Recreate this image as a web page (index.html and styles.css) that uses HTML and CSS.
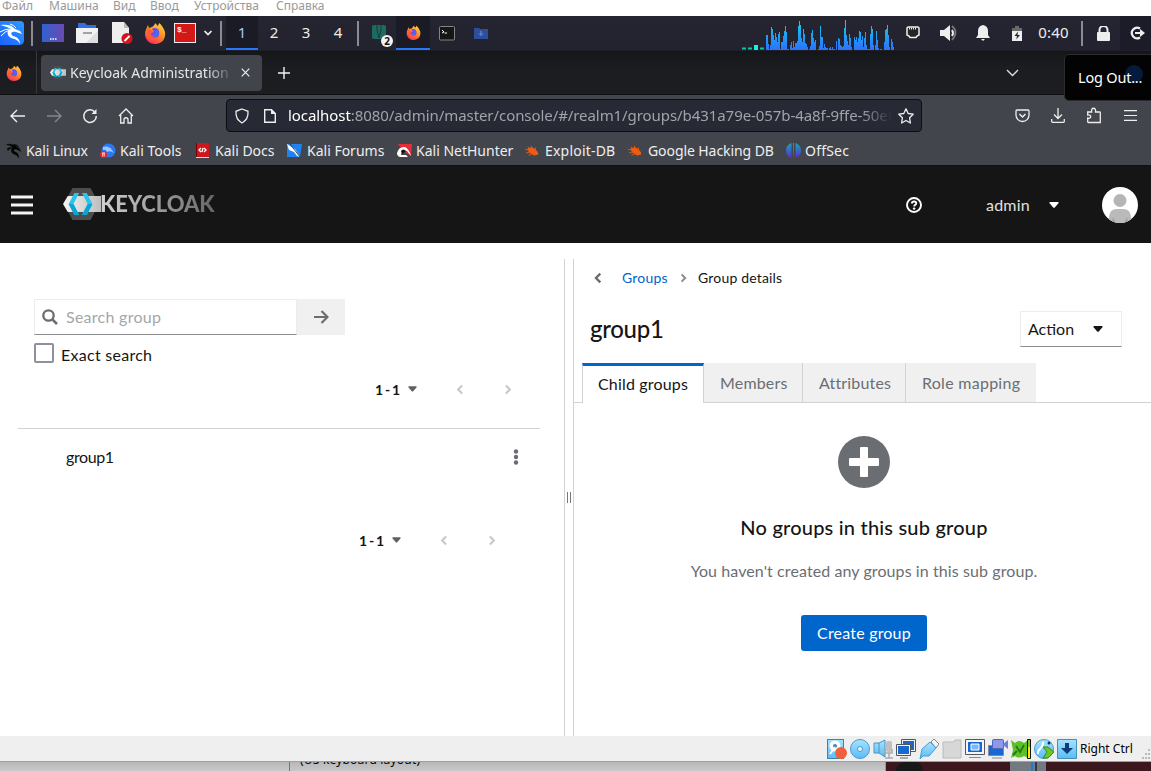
FILE: index.html
```html
<!DOCTYPE html>
<html lang="ru">
<head>
<meta charset="utf-8">
<title>Keycloak Administration UI</title>
<link rel="stylesheet" href="styles.css">
</head>
<body>
<svg class="defs" width="0" height="0">
  <defs>
    <linearGradient id="gFox" x1="0.8" y1="0" x2="0.3" y2="1"><stop offset="0" stop-color="#ffd43a"/><stop offset=".5" stop-color="#ff8a26"/><stop offset="1" stop-color="#f5305a"/></linearGradient>
    <linearGradient id="gDesk" x1="0" x2="1"><stop offset="0" stop-color="#2f62d0"/><stop offset="1" stop-color="#6a4ab2"/></linearGradient>
    <linearGradient id="gKali" x1="0" y1="1" x2="1" y2="0"><stop offset="0" stop-color="#1b62ff"/><stop offset="1" stop-color="#2c9cff"/></linearGradient>
    <linearGradient id="gBars" gradientUnits="userSpaceOnUse" x1="0" y1="0" x2="0" y2="30"><stop offset="0" stop-color="#10d8e8"/><stop offset="1" stop-color="#2b70ff"/></linearGradient>
    <linearGradient id="gOff" gradientUnits="userSpaceOnUse" x1="0" y1="0" x2="0" y2="15"><stop offset="0" stop-color="#12a8b4"/><stop offset="1" stop-color="#5a2ad8"/></linearGradient>
    <linearGradient id="gSky" x1="0" y1="0" x2="0" y2="1"><stop offset="0" stop-color="#a8e2ff"/><stop offset="1" stop-color="#58bdf4"/></linearGradient>
    <linearGradient id="gLogo" x1="0" x2="1"><stop offset="0" stop-color="#f5f5f5"/><stop offset="1" stop-color="#bdbdbd"/></linearGradient>
    <symbol id="fox" viewBox="0 0 22 22">
      <path d="M4 3l1 3 3-1c2-1 3-3 3-4l3 3 1-3c3 2 5 6 6 9 1 7-3 12-10 12C5 22 1 17 1 12c0-4 2-6 3-9z" fill="url(#gFox)"/>
      <path d="M8 7c2-2 6-1 7 2 1 4-1 7-4 7-4 0-5-3-4-5l3-1z" fill="#7a3ff0"/>
      <path d="M10 8c3-1 5 1 5 3s-2 4-4 4-3-2-2-3l3-1z" fill="#3f6df5"/>
      <path d="M4 5l3 3 3 1-3 2c1 4 5 5 8 3-2 5-9 5-12 0-1-3 0-6 1-9z" fill="#ff5a38" opacity=".75"/>
    </symbol>
    <symbol id="dragon" viewBox="0 0 24 24">
      <path d="M1 3c7-1 12 0 15 4l4 2 2 4-6-3c-4-1-6 2-3 4 4 1 6 4 6 9-2-4-5-5-8-6-4-3-4-7 0-9C9 5 5 4 1 3zM2 9c3-2 7-2 10-1-4 0-7 1-9 4zM12 3c3 0 5 1 7 4z" stroke="#050505" stroke-width=".8"/>
    </symbol>
    <symbol id="kc" viewBox="0 0 40 32">
      <path d="M10 0h19l9 16-9 16H10L1 16z" fill="#4d4d4d"/>
      <path d="M5 8h35v16H5L0 16z" fill="url(#gLogo)"/>
      <path d="M12 5h5L11 16l6 11h-5L6 16z" fill="#29c3ec"/><path d="M6 16h5l6 11h-5z" fill="#0aa5d2"/>
      <path d="M20 5h5l6 11-6 11h-5l6-11z" fill="#29c3ec"/><path d="M31 16l-6 11h-5l6-11z" fill="#0aa5d2"/>
    </symbol>
    <symbol id="bug" viewBox="0 0 16 14"><path d="M3 4l3-1q4-1 7 3 3 3 2 5-4 2-8-1Q3 8 3 4z" fill="#ee5c12"/><path d="M0 5l5 1M1 9l6 0M4 12l5-2M7 1l2 4M3 2l3 3M12 3v5M11 13l-1-3" stroke="#ee5c12"/></symbol>
    <symbol id="caret" viewBox="0 0 10 6"><path d="M1 0h8q1 .4.4 1.2L5.800 5.500q-.8.700-1.600 0L.600 1.200Q0 .4 1 0z" fill="currentColor"/></symbol>
    <symbol id="left" viewBox="0 0 8 12"><path d="M6.300 1.700L2 6l4.300 4.300" fill="none" stroke="currentColor" stroke-width="2.400"/></symbol>
    <symbol id="right" viewBox="0 0 8 12"><path d="M1.700 1.700L6 6l-4.300 4.300" fill="none" stroke="currentColor" stroke-width="2.400"/></symbol>
  </defs>
</svg>

<nav class="vm-menu"><span class="m1">Файл</span><span class="m2">Машина</span><span class="m3">Вид</span><span class="m4">Ввод</span><span class="m5">Устройства</span><span>Справка</span></nav>

<div class="panel">
  <div class="slot w28 start"><svg width="24" height="26" viewBox="0 0 24 26"><path d="M0 1h20q4 0 4 4v15q0 5-5 5H0z" fill="url(#gKali)"/><path d="M0 5c7-1 12 0 15 4l5 2 2 3-6-2c-5-1-6 2-3 4 5 1 7 4 7 8-2-4-5-5-9-6-5-3-4-8 0-9C8 7 4 6 0 5z" fill="#fff"/><path d="M0 12q5-3 10-3M1 16q4-5 9-6M10 4q4 1 6 4" fill="none" stroke="#fff"/></svg></div>
  <div class="slot w8"><i class="sep"></i></div>
  <div class="slot w34"><svg width="22" height="18" viewBox="0 0 22 18"><path d="M0 0h22v18H0z" fill="url(#gDesk)"/><path d="M8 15h1.500m1 0H12m1 0h1.500" stroke="#fff" stroke-width="1.500"/></svg></div>
  <div class="slot w34"><svg width="22" height="20" viewBox="0 0 22 20"><path d="M2 0h7l2 2h9v5H2z" fill="#2f6fe4"/><path d="M0 5h22v15H0z" fill="#f1f1f1"/><path d="M22 8v12H10z" fill="#dedede"/><path d="M7 10h9" stroke="#a2a2a2" stroke-width="2"/></svg></div>
  <div class="slot w36"><svg width="22" height="22" viewBox="0 0 22 22"><path d="M1 0h12l5 6v15H1z" fill="#eee"/><path d="M13 0v6h5z" fill="#bbb"/><circle cx="16" cy="16.500" r="5.500" fill="#d4141c"/><path d="M13.500 19l5-5" stroke="#fff" stroke-width="1.800"/></svg></div>
  <div class="slot w31 fx"><svg width="22" height="22"><use href="#fox"/></svg></div>
  <div class="slot w28"><div class="term-red">$_</div></div>
  <div class="slot w18"><svg width="10" height="6" viewBox="0 0 10 6"><path d="M1.500 1l3.500 3.500L8.500 1" fill="none" stroke="#eee" stroke-width="1.700"/></svg></div>
  <div class="slot w9"><i class="sep"></i></div>
  <div class="slot w32 active ws first">1</div><div class="slot w32 ws">2</div><div class="slot w32 ws">3</div><div class="slot w32 ws">4</div>
  <div class="slot w8"><i class="sep"></i></div>
  <div class="slot w34 zip"><svg width="14" height="14" viewBox="0 0 14 14"><rect width="14" height="14" rx="2" fill="#1f6a60"/><path d="M5 0v5l2 8 2-8V0" fill="none" stroke="#123f3a" stroke-width="1"/></svg><b class="count">2</b></div>
  <div class="slot w34 active"><svg width="15" height="15"><use href="#fox"/></svg></div>
  <div class="slot w34"><svg width="16" height="15" viewBox="0 0 16 15"><rect x=".5" y=".5" width="15" height="13.500" rx="1" fill="#161616" stroke="#858585"/><path d="M3 4l2 2-2 1M5.500 7H8" stroke="#fff" fill="none"/></svg></div>
  <div class="slot w34"><svg width="14" height="11" viewBox="0 0 14 11"><path d="M0 0h5l1 1h8v10H0z" fill="#2b4f9a"/><path d="M7 3v4M5 5.500l2 2 2-2" stroke="#6d9af0" fill="none"/></svg></div>
  <svg class="graph" width="152" height="34" viewBox="0 0 152 34"><path d="M0 32.500h4m2 0h4m8 0h4" stroke="#0ac4a4" stroke-width="2"/><path d="M12 29h4v5h-4z" fill="#10f5dc"/>
    <g transform="translate(24 4)" shape-rendering="crispEdges"><path fill="url(#gBars)" d="M0 30V15h2V24h1V29h1V25h1V7h1V9h1V15h1V20h1V13h1V17h1V22h1V14h1V12h1V29h1V22h2V16h1V11h1V6h1V12h1V29h2V30h1V25h1V22h1V28h1V21h1V27h1V23h2V21h1V6h1V1h1V5h1V18h1V22h1V9h1V14h1V23h1V24h1V27h1V30h1V29h1V26h1V13h1V10h1V18h1V22h1V20h1V30h2V29h1V26h1V6h1V17h2V28h1V24h1V27h1V28h2V30h1V28h1V27h1V29h1V27h1V29h2V30h1V21h1V30h1V18h1V19h1V25h1V26h1V27h1V26h1V8h1V0h1V15h1V21h1V25h1V14h1V18h1V27h1V30h2V17h1V20h1V17h1V22h1V18h1V11h1V12h1V20h1V16h1V27h1V18h1V12h1V25h1V29h3V14h1V6h1V9h1V25h1V30h1V25h1V11h1V20h1V28h1V30h1V29h2V30h2V22h1V10h1V9h1V5h1V15h1V27h1V30h1V19h1V22h1V27h1V30z"/></g></svg>
  <div class="slot w38 eth"><svg width="14" height="13" viewBox="0 0 14 13"><path d="M2 1h10l1 1v7l-2 1-1 1.500H4L3 10 1 9V2z" fill="#252525" stroke="#eee" stroke-width="1.500"/><path d="M3 2.500h8" stroke="#eee" stroke-width="2" stroke-dasharray="1 1"/></svg></div>
  <div class="slot w34"><svg width="18" height="16" viewBox="0 0 18 16"><path d="M0 5h4l6-5v16l-6-5H0z" fill="#eee"/><path d="M12 5q2 3 0 6" stroke="#eee" stroke-width="2" fill="none"/><path d="M12 1q7 6 0 14" stroke="#777" stroke-width="1.800" fill="none"/></svg></div>
  <div class="slot w34"><svg width="14" height="16" viewBox="0 0 14 16"><path d="M7 0q5 1 5 6v4l2 3H0l2-3V6q0-5 5-6zM5 14h4l-2 2z" fill="#eee"/></svg></div>
  <div class="slot w34"><svg width="10" height="15" viewBox="0 0 10 15"><path d="M3 0h4v2h3v5H0V2h3z" fill="#696969"/><path d="M0 5h10v10H0z" fill="#eee"/><path d="M6 5.500L2.500 10H5l-.8 3.500L8 9H5.500z" fill="#252631"/></svg></div>
  <div class="slot w40 clock">0:40</div>
  <div class="slot w17"><i class="sep"></i></div>
  <div class="slot w24"><svg width="13" height="15" viewBox="0 0 13 15"><path d="M2.500 7V4a4 4 0 018 0v3" fill="none" stroke="#eee" stroke-width="2"/><rect y="6" width="13" height="9" rx="1" fill="#eee"/></svg></div>
  <div class="slot exit"><svg width="16" height="14" viewBox="0 0 16 14"><path d="M11 2.500A5.300 5.300 0 1011 11.500" fill="none" stroke="#eee" stroke-width="2.200"/><path d="M6 6h5V3l5 4-5 4V8H6z" fill="#eee"/></svg></div>
</div>

<div class="tabbar">
  <div class="pin"><svg width="16" height="16"><use href="#fox"/></svg></div>
  <div class="tab"><svg width="16" height="13"><use href="#kc"/></svg><span class="tab-title">Keycloak Administration UI</span><svg width="9" height="9" viewBox="0 0 9 9"><path d="M.7.7l7.600 7.600m0-7.600L.7 8.300" stroke="#eee" stroke-width="1.200"/></svg></div>
  <svg class="plus" width="12" height="12" viewBox="0 0 12 12"><path d="M6 0v12M0 6h12" stroke="#f4f4f4" stroke-width="1.400"/></svg>
  <svg class="alltabs" width="13" height="8" viewBox="0 0 13 8"><path d="M1 1l5.500 5.500L12 1" fill="none" stroke="#ddd" stroke-width="1.400"/></svg>
  <div class="tip">Log Out...<i></i></div>
</div>

<div class="navbar">
  <div class="slot w36"><svg width="16" height="14" viewBox="0 0 16 14"><path d="M15 7H1.500M7 1L1 7l6 6" stroke="#eee" stroke-width="1.400" fill="none"/></svg></div>
  <div class="slot w36"><svg width="16" height="14" viewBox="0 0 16 14"><path d="M1 7h13.500M9 1l6 6-6 6" stroke="#85878c" stroke-width="1.400" fill="none"/></svg></div>
  <div class="slot w36"><svg width="16" height="16" viewBox="0 0 16 16"><path d="M13 4.300A6.300 6.300 0 1014.300 8" stroke="#eee" stroke-width="1.500" fill="none"/><path d="M14.500 1v5h-5z" fill="#eee"/></svg></div>
  <div class="slot w36"><svg width="16" height="16" viewBox="0 0 16 16"><path d="M1 8l7-7 7 7M2.700 7v8H6v-4q2-2.500 4 0v4h3.300V7" stroke="#eee" stroke-width="1.300" fill="none"/></svg></div>
  <div class="url">
    <svg width="16" height="16" viewBox="0 0 16 16"><path d="M8 1l6 2.300c.4 5-1 9-6 11.700C3 12.300 1.600 8.300 2 3.300z" stroke="#eee" stroke-width="1.300" fill="none"/></svg>
    <svg width="12" height="14" viewBox="0 0 12 14"><path d="M1 .7h6.500L11.300 4.500v8.800H.7V.7z" stroke="#eee" stroke-width="1.400" fill="none"/><path d="M7 0v5h5z" fill="#eee"/></svg>
    <span class="addr"><b>localhost</b>:8080/admin/master/console/#/realm1/groups/b431a79e-057b-4a8f-9ffe-50ef</span>
    <svg width="16" height="16" viewBox="0 0 16 16"><path d="M8 .8l2.200 4.700 5 .7-3.600 3.600.8 5.200L8 12.500 3.600 15l.8-5.200L.8 6.200l5-.7z" stroke="#eee" stroke-width="1.300" stroke-linejoin="round" fill="none"/></svg>
  </div>
  <div class="nav-right">
    <div class="slot w36"><svg width="15" height="14" viewBox="0 0 15 14"><path d="M2 1h11q1 0 1 1v4a6.500 6.500 0 01-13 0V2q0-1 1-1z" stroke="#eee" stroke-width="1.300" fill="none"/><path d="M4.500 5l3 3 3-3" stroke="#eee" stroke-width="1.500" fill="none"/></svg></div>
    <div class="slot w36"><svg width="14" height="15" viewBox="0 0 14 15"><path d="M7 0v10M3 6.500l4 4 4-4M.7 11v2.500q0 .8.8.8h11q.8 0 .8-.8V11" stroke="#eee" stroke-width="1.300" fill="none"/></svg></div>
    <div class="slot w36"><svg width="14" height="17" viewBox="0 0 14 17"><path d="M1.500 15.500q-.8 0-.8-1V11c4 1.500 4-4 0-3V5h4C3.500 0 9.500 0 8.500 5h4q.8 0 .8.800v9.700z" stroke="#eee" stroke-width="1.300" fill="none"/></svg></div>
    <div class="slot w36"><svg width="13" height="11" viewBox="0 0 13 11"><path d="M0 .7h13M0 5.500h13M0 10.300h13" stroke="#eee" stroke-width="1.200"/></svg></div>
  </div>
</div>

<div class="bookmarks">
  <a class="b1"><svg width="16" height="17" viewBox="0 0 24 24" fill="#050505"><use href="#dragon"/></svg>Kali Linux</a>
  <a class="b2"><svg width="16" height="16" viewBox="0 0 16 16"><circle cx="8.500" cy="7.500" r="7" fill="#2879f4"/><path d="M3 4q6-2 9 3l2 3q-4-3-7-1Q6 6 3 7z" fill="#9cc6ff"/><circle cx="3.500" cy="11.500" r="3.500" fill="#e8232c"/><path d="M2 10h3m-2.300 0v3.500m1.500-3.500v3.500" stroke="#fff" stroke-width=".8"/></svg>Kali Tools</a>
  <a class="b3"><svg width="13" height="15" viewBox="0 0 13 15"><path d="M0 0h13v15H0z" fill="#ce161c"/><path d="M0 0h1v15H0z" fill="#700"/><path d="M0 14h13v1H0z" fill="#ddd"/><path d="M5 5L3 7l2 2M8 5l2 2-2 2M7 5L6 9" stroke="#fff" fill="none" stroke-width="1.300"/></svg>Kali Docs</a>
  <a class="b4"><svg width="16" height="15" viewBox="0 0 16 15"><path d="M0 1h15l-2 13H0z" fill="#2083f4"/><path d="M0 1l8 5 5 8-3-1L7 9 2 7z" fill="#fff"/><path d="M3 1l10 13" stroke="#222" stroke-width=".8"/></svg>Kali Forums</a>
  <a class="b5"><svg width="16" height="15" viewBox="0 0 16 15"><path d="M2 1h14l-1 12-8-5z" fill="#e52e38"/><path d="M1 10Q3 3 9 4q4 2 6 9l-4-5Q6 6 5 12h5l2 2H4q-3-1-3-4z" fill="#fff"/><path d="M5 8q2-3 5 0l-4 3z" fill="#111"/></svg>Kali NetHunter</a>
  <a class="b6"><svg width="14" height="12"><use href="#bug"/></svg>Exploit-DB</a>
  <a class="b7"><svg width="14" height="12"><use href="#bug"/></svg>Google Hacking DB</a>
  <a class="b8"><svg width="15" height="15" viewBox="0 0 15 15"><path d="M5.500 0v15Q0 13 0 7.500T5.500 0zM9.500 0v15Q15 13 15 7.500T9.500 0zM7 0h1v15H7z" fill="url(#gOff)"/></svg>OffSec</a>
</div>

<header class="kc-head">
  <svg class="burger" width="22" height="20" viewBox="0 0 22 20"><path d="M0 2h22M0 10h22M0 18h22" stroke="#f4f4f4" stroke-width="3.200"/></svg>
  <div class="brand"><svg width="38" height="32" viewBox="0 0 40 32" preserveAspectRatio="none"><use href="#kc"/></svg><span>KEYCLOAK</span></div>
  <svg class="help" width="16" height="16" viewBox="0 0 16 16"><circle cx="8" cy="8" r="7" fill="none" stroke="#fff" stroke-width="1.900"/><path d="M5.700 6.500q.3-2 2.400-2 2.200 0 2.200 1.800c0 1.500-2.100 1.500-2.100 3.100" fill="none" stroke="#fff" stroke-width="1.800"/><circle cx="8.100" cy="11.600" r="1.200" fill="#fff"/></svg>
  <span class="user">admin</span>
  <svg class="ucaret" width="10" height="6"><use href="#caret"/></svg>
  <svg class="avatar" width="36" height="36" viewBox="0 0 36 36"><defs><clipPath id="av"><circle cx="18" cy="18" r="18"/></clipPath></defs><g clip-path="url(#av)"><path d="M0 0h36v36H0z" fill="#fff"/><path d="M7 36v-5q0-9 8-9h6q8 0 8 9v5z" fill="#bababa"/><path d="M10 36l1-6 2 6zm16 0l-1-6-2 6z" fill="#999"/><circle cx="18" cy="13.500" r="6.500" fill="#b5b5b5"/></g></svg>
</header>

<main class="content">
  <section class="tree">
    <div class="search">
      <div class="field"><svg width="16" height="16" viewBox="0 0 16 16"><circle cx="6.500" cy="6.500" r="5.200" fill="none" stroke="#6a6e73" stroke-width="2.300"/><path d="M10.300 10.300l4.700 4.700" stroke="#6a6e73" stroke-width="2.600"/></svg><span>Search group</span></div>
      <div class="go"><svg width="15" height="14" viewBox="0 0 15 14"><path d="M0 7h13M7.500 1l6 6-6 6" fill="none" stroke="#6a6e73" stroke-width="2.200"/></svg></div>
    </div>
    <div class="exact"><i></i><span>Exact search</span></div>
    <div class="pager"><b>1 - 1</b><svg class="pc" width="9" height="6"><use href="#caret"/></svg><svg class="pl" width="8" height="11"><use href="#left"/></svg><svg class="pr" width="8" height="11"><use href="#right"/></svg></div>
    <div class="row"><span>group1</span><svg width="6" height="16" viewBox="0 0 6 16"><g fill="#6a6e73"><circle cx="3" cy="2.500" r="2.200"/><circle cx="3" cy="8" r="2.200"/><circle cx="3" cy="13.500" r="2.200"/></g></svg></div>
    <div class="pager second"><b>1 - 1</b><svg class="pc" width="9" height="6"><use href="#caret"/></svg><svg class="pl" width="8" height="11"><use href="#left"/></svg><svg class="pr" width="8" height="11"><use href="#right"/></svg></div>
  </section>
  <div class="splitter"><i></i></div>
  <section class="detail">
    <div class="crumbs"><svg width="8" height="12"><use href="#left"/></svg><a>Groups</a><svg class="sepc" width="7" height="10"><use href="#right"/></svg><span>Group details</span></div>
    <div class="title"><h1>group1</h1><div class="action"><span>Action</span><svg width="10" height="6"><use href="#caret"/></svg></div></div>
    <div class="tabs"><div class="t t1">Child groups</div><div class="t t2">Members</div><div class="t t3">Attributes</div><div class="t t4">Role mapping</div></div>
    <div class="empty">
      <svg width="52" height="52" viewBox="0 0 52 52"><circle cx="26" cy="26" r="26" fill="#6a6e73"/><rect x="22" y="11" width="8" height="30" rx="1" fill="#fff"/><rect x="11" y="22" width="30" height="8" rx="1" fill="#fff"/></svg>
      <h2>No groups in this sub group</h2>
      <p>You haven't created any groups in this sub group.</p>
      <div class="create">Create group</div>
    </div>
  </section>
</main>

<footer class="vm-status">
  <svg width="20" height="20" viewBox="0 0 20 20"><rect x=".5" y=".5" width="16" height="19" fill="url(#gSky)" stroke="#3b82b8"/><circle cx="8" cy="7" r="5.500" fill="#fff"/><circle cx="8" cy="7" r="2" fill="#3989c5"/><path d="M8 8l-5 7" stroke="#fff" stroke-width="2"/><circle cx="14" cy="14" r="6" fill="#f2603a"/></svg>
  <svg width="20" height="20" viewBox="0 0 20 20"><circle cx="10" cy="10" r="9.500" fill="url(#gSky)" stroke="#4a9bd0"/><circle cx="10" cy="10" r="2.500" fill="#e8f6ff" stroke="#4a9bd0"/></svg>
  <svg width="20" height="20" viewBox="0 0 20 20"><path d="M1 4h5l6-3v17l-6-4H1z" fill="url(#gSky)" stroke="#4a94c4"/><path d="M6 4v10" stroke="#4a94c4"/><rect x="13" y="2" width="6" height="11" rx="2" fill="#c0c0c0"/><path d="M12 10v4h7v-4M16 14v5M12 19h8" stroke="#aaa" fill="none" stroke-width="1.500"/></svg>
  <svg width="20" height="20" viewBox="0 0 20 20"><path d="M5.500.5h14v12h-14z" fill="#f2f2f2" stroke="#555"/><path d="M7 2h11v9H7z" fill="#1d66c4"/><path d="M.5 5.500h14v11H.5z" fill="#f2f2f2" stroke="#555"/><path d="M2 7h11v8H2z" fill="#1769d2"/><path d="M4 19h8" stroke="#667"/></svg>
  <svg width="20" height="20" viewBox="0 0 20 20"><path d="M12 3l3-3 5 5-3 4z" fill="#f5f5f5" stroke="#888"/><path d="M3 10l8-7 6 6-7 8H4l-3 3 1-5z" fill="url(#gSky)" stroke="#4c9bce"/></svg>
  <svg width="20" height="20" viewBox="0 0 20 20"><path d="M1 3h10l2-2h6v18H1z" fill="#d7d7d7" stroke="#bbb"/></svg>
  <svg width="20" height="20" viewBox="0 0 20 20"><path d="M.5.500h19v15H.5z" fill="#f5f5f5" stroke="#556"/><path d="M4 18.500h12" stroke="#889"/><path d="M3 3h14v10H3z" fill="#1769d2"/><path d="M6 5h8v6H6z" fill="#79b8fa" stroke="#fff"/></svg>
  <svg width="20" height="20" viewBox="0 0 20 20"><path d="M.5 6.500h15v10H.5z" fill="#1769d2" stroke="#889"/><path d="M4 19h10" stroke="#889"/><rect x="4.500" y=".5" width="11" height="9" rx="1" fill="#8d98ed" stroke="#5565b5"/><path d="M15 5l5-4v9l-5-4z" fill="#727ed6"/></svg>
  <svg width="20" height="20" viewBox="0 0 20 20"><path d="M0 1l4 3q4-4 9 0l4-3v18l-4-2q-5 3-9 0l-4 2 2-8z" fill="#5bc126"/><path d="M5 7l4 6 4-7M2 16l4-4" fill="none" stroke="#267718" stroke-width="1.800"/><path d="M16.500.5h3v19h-3z" fill="#80cc10" stroke="#111"/><path d="M18 8v11" stroke="#ffe800" stroke-width="2"/></svg>
  <svg width="20" height="20" viewBox="0 0 20 20"><circle cx="10" cy="10" r="9.500" fill="url(#gSky)" stroke="#4b9ac9"/><path d="M4 15C3 9 10 10 9 3" fill="none" stroke="#fff" stroke-width="2"/><path d="M9 8h5l6 5-6 6H9l4-6z" fill="#6bc52b" stroke="#378b19"/><circle cx="15" cy="4" r="1.500" fill="#135"/></svg>
  <svg width="20" height="20" viewBox="0 0 20 20"><path d="M.5.500h19v19H.5z" fill="url(#gSky)" stroke="#458fb9"/><path d="M8 4h4v5h4l-6 6-6-6h4z" fill="#103d78"/></svg>
  <span>Right Ctrl</span>
  <svg class="grip" width="10" height="10" viewBox="0 0 10 10"><path d="M7 0h2v2H7zM4 4h2v2H4zm3 0h2v2H7zM1 8h2v2H1zm3 0h2v2H4zm3 0h2v2H7z" fill="#b9b9b9"/></svg>
</footer>
<div class="behind"><div class="u1"></div><div class="u2"><span>(US keyboard layout)</span></div><div class="u3"><svg width="266" height="10" viewBox="0 0 266 10"><path d="M0 0h266v10H0z" fill="#3d171e"/><path d="M0 0h1v10H0z" fill="#999"/><path d="M11 10q0-8 8-10h13q6 2 6 10z" fill="#181818"/><path d="M125 0h36v10h-36z" fill="#737981"/><path d="M146 0h2v10h-2z" fill="#2779c7"/><path d="M150 0h2v10h-2z" fill="#333a42"/></svg></div></div>
</body>
</html>
```
FILE: styles.css
```css
* { box-sizing: border-box; }
body { margin: 0; width: 1151px; height: 771px; overflow: hidden; background: #fff; font-family: "Noto Sans", sans-serif; }
svg { display: block; flex: none; }
i { display: block; }
.defs { position: absolute; }

.vm-menu { height: 16px; display: flex; padding-left: 2px; font: 12px/12px "Noto Sans", sans-serif; color: #999; white-space: nowrap; }
.vm-menu .m1 { width: 47px; }
.vm-menu .m2 { width: 64px; }
.vm-menu .m3 { width: 37px; }
.vm-menu .m4 { width: 44px; }
.vm-menu .m5 { width: 82px; }

.panel { height: 34px; display: flex; background: linear-gradient(#242530, #22232e); }
.slot { display: flex; flex: none; align-items: center; justify-content: center; height: 34px; }
.start { justify-content: flex-start; }
.w8 { width: 8px; } .w9 { width: 9px; padding-right: 1px; } .w17 { width: 17px; padding-right: 2px; } .w18 { width: 18px; }
.w24 { width: 24px; } .w28 { width: 28px; } .w31 { width: 31px; } .w32 { width: 32px; }
.w34 { width: 34px; } .w36 { width: 36px; } .w38 { width: 38px; } .w40 { width: 40px; }
.fx { padding-right: 1px; }
.eth { padding-bottom: 2px; }
.sep { width: 2px; height: 25px; background: #8b8b90; }
.active { background: #1a1b25; border-bottom: 2px solid #2777ff; }
.ws, .clock { color: #eee; font-size: 15px; padding-bottom: 2px; }
.clock { letter-spacing: .2px; padding-right: 1px; }
.ws.first { color: #9bcaff; padding: 0; }
.term-red { width: 22px; height: 20px; background: #d41717; border: 1px solid #eee; color: #fff; font: bold 8px/11px "Liberation Mono", monospace; padding-left: 2px; }
.zip { position: relative; padding-bottom: 2px; }
.count { position: absolute; left: 19px; top: 19px; width: 12px; height: 12px; border-radius: 6px; background: #f4f4f4; color: #111; font: bold 10px/12px "Noto Sans", sans-serif; text-align: center; }
.graph { margin-left: 244px; }
.exit { width: 31px; margin-left: 5px; padding-left: 3px; background: #1b1c27; }

.tabbar { position: relative; height: 45px; display: flex; align-items: center; background: linear-gradient(#15161a, #1c1d21 40%); border-top: 1px solid #1f2025; border-bottom: 1px solid #101013; }
.pin { width: 37px; height: 43px; display: flex; align-items: center; padding-left: 6px; border-right: 1px solid #38393d; }
.tab { width: 221px; height: 36px; margin-left: 4px; border-radius: 4px; background: #42444c; display: flex; align-items: center; padding-left: 9px; }
.tab-title { width: 167px; margin: 0 4px 0 4px; overflow: hidden; white-space: nowrap; font-size: 14px; line-height: 20px; color: #e6e6e6; mask-image: linear-gradient(90deg, #000 82%, transparent 98%); }
.plus { margin-left: 16px; }
.alltabs { margin-left: 716px; }
.tip { position: absolute; z-index: 2; left: 1064px; top: 3px; width: 92px; height: 47px; border: 1px solid #2c2c2e; border-radius: 5px; background: #030303; color: #fff; font-size: 14.5px; letter-spacing: -.2px; line-height: 45px; padding-left: 13px; white-space: nowrap; }
.tip i { position: absolute; z-index: -1; left: 60px; top: 10px; width: 18px; height: 18px; border-radius: 9px; background: #061a3c; }

.navbar { height: 41px; display: flex; align-items: center; background: #43454d; }
.url { width: 696px; height: 33px; margin-left: 82px; display: flex; align-items: center; background: #272934; border: 1px solid #0e0e12; border-radius: 4px; padding-left: 7px; }
.url svg + svg { margin-left: 14px; }
.addr { width: 604px; margin: 0 6px 0 12px; padding-bottom: 2px; color: #a2a3a9; font-size: 15px; letter-spacing: -.07px; white-space: nowrap; overflow: hidden; mask-image: linear-gradient(90deg, #000 95%, transparent); }
.addr b { font-weight: 400; color: #fff; }
.nav-right { display: flex; margin-left: 82px; }

.bookmarks { height: 30px; display: flex; align-items: center; background: #43454d; border-bottom: 1px solid #111; font-size: 14px; color: #eee; white-space: nowrap; padding-left: 6px; }
.bookmarks a { display: flex; align-items: center; gap: 4px; flex: none; }
.b1 { width: 94px; letter-spacing: -.12px; } .b2 { width: 96px; } .b3 { width: 91px; } .b4 { width: 109px; }
.b5 { width: 129px; } .b6 { width: 103px; letter-spacing: .2px; } .b7 { width: 158px; letter-spacing: -.08px; }
.b8 { letter-spacing: .2px; }
.bookmarks .b3, .bookmarks .b6, .bookmarks .b7 { gap: 6px; }

.kc-head { height: 77px; background: #151515; display: flex; align-items: center; font-family: Lato, sans-serif; color: #e0e0e0; }
.burger { margin-left: 11px; }
.brand { display: flex; align-items: center; width: 152px; margin-left: 30px; padding-bottom: 2px; }
.brand span { margin-left: -1px; font: 900 22px/32px Lato, sans-serif; letter-spacing: -.05px; background: linear-gradient(90deg, #d2d2d2, #666); background-clip: text; color: transparent; }
.help { margin-left: 691px; }
.user { width: 62px; margin-left: 64px; font-size: 16px; letter-spacing: .2px; }
.ucaret { margin-left: 1px; color: #fff; }
.avatar { margin-left: 43px; }

.content { height: 493px; display: flex; font-family: Lato, sans-serif; font-size: 16px; color: #151515; background: #fff; }
.tree { width: 564px; padding: 56px 0 0; }
.search { display: flex; margin-left: 34px; width: 311px; height: 36px; }
.field { width: 263px; border: 1px solid #ececec; border-bottom-color: #8a8d90; display: flex; align-items: center; padding-left: 7px; gap: 8px; color: #a5a7aa; letter-spacing: .27px; }
.field span { padding-bottom: 2px; }
.go { width: 48px; background: #f0f0f0; display: flex; align-items: center; justify-content: center; }
.exact { display: flex; align-items: flex-start; margin: 8px 0 0 34px; height: 26px; gap: 7px; letter-spacing: .27px; }
.exact i { width: 20px; height: 20px; border: 2px solid #8f8f9d; border-radius: 2px; }
.exact span { line-height: 24px; }
.pager { height: 40px; display: flex; align-items: center; margin: 0 0 0 375px; font-size: 14px; }
.pager b { width: 33px; letter-spacing: -.3px; word-spacing: -1px; }
.pager svg { color: #c9c9c9; }
.pager .pc { color: #5d6065; }
.pager .pl { margin-left: 39px; }
.pager .pr { margin-left: 40px; }
.row { height: 58px; width: 522px; margin: 19px 0 0 18px; border-top: 1px solid #d2d2d2; display: flex; align-items: center; padding: 0 0 2px 48px; }
.row span { width: 447px; letter-spacing: -.4px; }
.pager.second { margin: 34px 0 0 359px; }
.splitter { width: 10px; height: 477px; margin-top: 16px; border: 1px solid #d2d2d2; border-width: 0 1px; display: flex; align-items: center; justify-content: center; }
.splitter i { width: 4px; height: 11px; border: 1px solid #777; border-width: 0 1px; }
.detail { width: 577px; }
.crumbs { display: flex; align-items: center; height: 70px; padding: 0 0 1px 20px; font-size: 14px; letter-spacing: .18px; color: #151515; }
.crumbs svg { color: #6a6e73; }
.crumbs a { width: 58px; margin-left: 20px; color: #06c; }
.crumbs .sepc { margin: 0 11px 0 0; color: #8a8d90; }
.title { height: 50px; display: flex; align-items: flex-start; padding-left: 16px; }
h1 { font: 500 24px/32px Lato, sans-serif; letter-spacing: -.3px; margin: 0; width: 430px; }
.action { width: 102px; height: 36px; margin-top: -2px; border: 1px solid #ececec; border-bottom-color: #8a8d90; display: flex; align-items: center; padding-left: 7px; }
.action span { width: 65px; padding-bottom: 2px; }
.tabs { height: 40px; display: flex; padding-left: 8px; border-bottom: 1px solid #d2d2d2; }
.t { height: 39px; background: #f0f0f0; color: #6a6e73; display: flex; align-items: center; padding-top: 0; padding-left: 16px; border-right: 1px solid #d2d2d2; white-space: nowrap; letter-spacing: .17px; }
.t1 { width: 122px; height: 40px; background: #fff; color: #151515; border-top: 3px solid #06c; border-left: 1px solid #d2d2d2; padding-left: 15px; padding-bottom: 3px; }
.t2 { width: 99px; } .t3 { width: 103px; }
.t4 { width: 130px; border-right: 0; letter-spacing: .27px; }
.empty { width: 100%; padding: 33px 0 0 3px; display: flex; flex-direction: column; align-items: center; }
h2 { margin: 23px 0 0; font: 500 20px/32px Lato, sans-serif; letter-spacing: .2px; color: #151515; }
.empty p { margin: 16px 0 0; line-height: 24px; color: #6a6e73; letter-spacing: .09px; }
.create { width: 126px; height: 36px; margin-top: 32px; background: #06c; color: #fff; border-radius: 3px; text-align: center; line-height: 36px; letter-spacing: .2px; }

.vm-status { height: 25px; background: #efefef; display: flex; align-items: center; gap: 3px; padding-left: 827px; }
.vm-status span { width: 58px; font-size: 12px; white-space: nowrap; color: #000; }
.grip { align-self: flex-end; margin-bottom: 2px; }
.behind { height: 10px; border-top: 1px solid #a0a0a0; background: linear-gradient(#b8b8b8, #c8c8c8); display: flex; overflow: hidden; }
.u1 { width: 289px; height: 10px; }
.u2 { width: 596px; height: 10px; border-left: 1px solid #777; padding-left: 10px; color: #000; }
.u2 span { display: block; margin-top: -10px; font: 12px/16px "Noto Sans", sans-serif; letter-spacing: .2px; }
.u3 { width: 266px; }
```
